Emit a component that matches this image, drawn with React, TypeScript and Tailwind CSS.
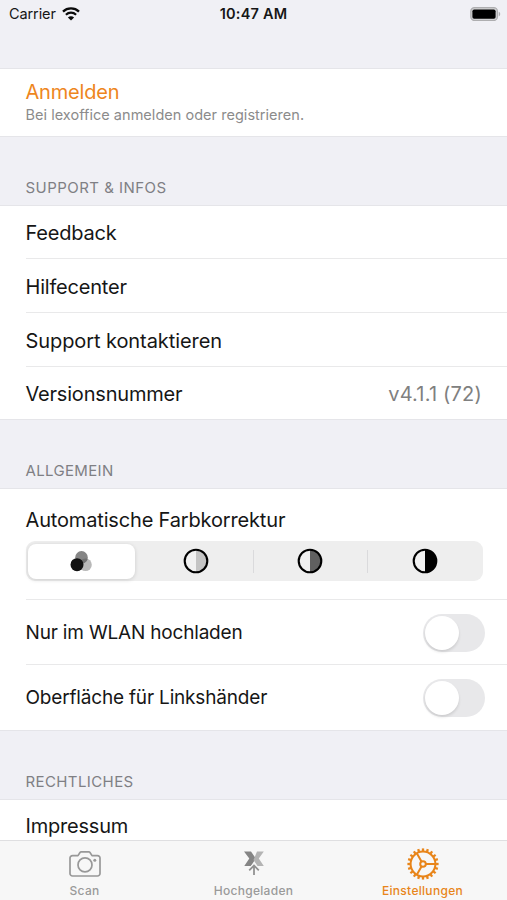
import React from 'react';

const supportRows = [
  { label: 'Feedback', value: '', height: 'h-[52px]', tracking: 'tracking-[-0.2px]' },
  { label: 'Hilfecenter', value: '', height: 'h-[54px]', tracking: 'tracking-[-0.2px]' },
  { label: 'Support kontaktieren', value: '', height: 'h-[54px]', tracking: 'tracking-[-0.08px]' },
  { label: 'Versionsnummer', value: 'v4.1.1 (72)', height: 'h-[53px]', tracking: 'tracking-[-0.2px]' },
];

const corrections = ['#c4c4c4', '#606060', '#000000'];

const WifiIcon = () => (
  <svg width="18" height="14" viewBox="0 0 18 14" fill="none" stroke="#0a0a0a">
    <path d="M1 4.6C5.4.4 12.6.4 17 4.6" strokeWidth="2.3" />
    <path d="M3.9 7.7c2.9-2.7 7.3-2.7 10.2 0" strokeWidth="2.2" />
    <path d="M9 13.6L5.9 10.4c1.8-1.6 4.4-1.6 6.2 0z" fill="#0a0a0a" stroke="none" />
  </svg>
);

const BatteryIcon = () => (
  <svg width="31" height="14" viewBox="0 0 31 14">
    <rect x="0.8" y="0.7" width="26.6" height="12.8" rx="3.6" fill="#d0d0d2" stroke="#aeaeb0" strokeWidth="1.2" />
    <rect x="2.4" y="2.4" width="23.2" height="9.3" rx="1.8" fill="#000" />
    <path d="M28.7 4.8c2 .7 2 3.9 0 4.6z" fill="#aeaeb0" />
  </svg>
);

const FiltersIcon = () => (
  <svg width="24" height="24" viewBox="0 0 24 24">
    <circle cx="16.5" cy="15.7" r="6.3" fill="#b8b8b8" />
    <circle cx="12.5" cy="8.4" r="6.3" fill="#858585" />
    <path d="M10.6 14.4a6.3 6.3 0 0 0 8-4.7 6.3 6.3 0 0 0-8 4.7z" fill="#707070" />
    <circle cx="8" cy="15.7" r="6.5" fill="#111" />
  </svg>
);

const ContrastIcon = ({ fill }: { fill: string }) => (
  <svg width="26" height="26" viewBox="0 0 26 26">
    <circle cx="13" cy="13" r="11.3" fill="#f1f1f1" />
    <path d="M13 1.7a11.3 11.3 0 0 1 0 22.6z" fill={fill} />
    <circle cx="13" cy="13" r="11.3" fill="none" stroke="#000" strokeWidth="2.1" />
  </svg>
);

const CameraIcon = () => (
  <svg width="32" height="26" viewBox="0 0 32 26" fill="none" stroke="#989898" strokeWidth="1.7" strokeLinejoin="round">
    <path d="M3.5 4.6H9l2-3.1c.3-.4.6-.6 1.1-.6h7.8c.5 0 .8.2 1.1.6l2 3.1h5.5A2.5 2.5 0 0 1 31 7.1v15.4a2.5 2.5 0 0 1-2.5 2.5h-25A2.5 2.5 0 0 1 1 22.5V7.1a2.5 2.5 0 0 1 2.5-2.5z" />
    <circle cx="16" cy="13.9" r="7" />
    <circle cx="25.8" cy="9.2" r="1.5" fill="#989898" stroke="none" />
  </svg>
);

const UploadedIcon = () => (
  <svg width="20" height="25" viewBox="0 0 20 25">
    <path d="M0 .5h7l4.800 7L7 15H.3l5-7.500z" fill="#858585" />
    <path d="M13 .5h6.800l-5 7 5 7.500h-6.300L9.500 9z" fill="#b4b4b4" />
    <path d="M10 11.600L5.500 16.200h9z" fill="#f7f7f7" />
    <path d="M10 24V14.500M5.200 19.400L10 14.600l4.800 4.800" fill="none" stroke="#929292" strokeWidth="1.8" />
  </svg>
);

const teeth = Array.from({ length: 20 }, (_, i) => i * 18);

const GearIcon = () => (
  <svg width="32" height="32" viewBox="0 0 32 32" fill="none" stroke="#e8851a" strokeWidth="2">
    <circle cx="16" cy="16" r="12.4" />
    {teeth.map((angle) => (
      <path key={angle} d="M16 .4v3.4" strokeWidth="2.3" transform={`rotate(${angle} 16 16)`} />
    ))}
    <circle cx="16" cy="16" r="2.8" />
    <path d="M19 16h9.4M14.5 13.4L9.8 5.3M14.5 18.6l-4.7 8.1" />
  </svg>
);

const SectionTitle = ({ children, className }: { children: React.ReactNode; className: string }) => (
  <h2 className={`flex items-end pl-[25.5px] text-[15px] leading-5 text-[#7f7f84] ${className}`}>{children}</h2>
);

const Toggle = () => (
  <button role="switch" aria-checked="false" className="flex h-[38px] w-[62px] items-center rounded-full bg-[#e8e8ea] pl-[2px]">
    <span className="h-[34px] w-[34px] rounded-full bg-white shadow-[0_2px_3px_rgba(0,0,0,0.12)]" />
  </button>
);

const App = () => {
  return (
    <div className="flex h-[900px] w-[507px] flex-col overflow-hidden bg-[#f0f0f5] font-['Inter','Liberation_Sans',sans-serif] text-[20px] text-[#161616]">
      <header className="grid h-[68px] shrink-0 grid-cols-3 items-start px-[9px] pt-[4px] text-[14.5px] leading-5">
        <div className="flex items-center gap-[6px] tracking-[-0.1px]">
          Carrier
          <WifiIcon />
        </div>
        <div className="text-center font-semibold tracking-[0.2px]">10:47 AM</div>
        <div className="mr-[-3px] flex h-[19px] items-center justify-end">
          <BatteryIcon />
        </div>
      </header>

      <main className="min-h-0 flex-1 overflow-hidden">
        <section className="h-[69px] border-y border-[#e5e5e9] bg-white pl-[25.5px] pt-[10px]">
          <p className="leading-[26px] tracking-[-0.2px] text-[#ee861d]">Anmelden</p>
          <p className="text-[14.5px] leading-5 tracking-[0.03px] text-[#8b8b8b]">Bei lexoffice anmelden oder registrieren.</p>
        </section>

        <SectionTitle className="h-[68px] pb-[7px] tracking-[0.46px]">SUPPORT &amp; INFOS</SectionTitle>
        <section className="border-y border-[#e5e5e9] bg-white pl-[25.5px]">
          {supportRows.map((row, index) => (
            <div
              key={row.label}
              className={`flex items-center justify-between pr-[25px] pt-[2px] ${row.height} ${index > 0 ? 'border-t border-[#e9e9ea]' : ''}`}
            >
              <span className={row.tracking}>{row.label}</span>
              <span className="tracking-[0.2px] text-[#808080]">{row.value}</span>
            </div>
          ))}
        </section>

        <SectionTitle className="h-[68px] pb-[7px] tracking-[0.35px]">ALLGEMEIN</SectionTitle>
        <section className="border-y border-[#e5e5e9] bg-white pl-[25.5px]">
          <div className="h-[110px] pr-[24.5px] pt-[18px]">
            <p className="leading-[26px] tracking-[-0.16px]">Automatische Farbkorrektur</p>
            <div className="mt-[8px] grid h-[40px] grid-cols-[113px_114px_114px_1fr] items-center rounded-[9px] bg-[#eee]">
              <button className="ml-[2px] mr-[4px] flex h-[35px] items-center justify-center rounded-[8px] bg-white shadow-[0_1px_4px_rgba(0,0,0,0.14)]">
                <FiltersIcon />
              </button>
              {corrections.map((fill, index) => (
                <button
                  key={fill}
                  className={`flex h-[23px] items-center justify-center ${index > 0 ? 'border-l border-[#dadadc]' : ''}`}
                >
                  <ContrastIcon fill={fill} />
                </button>
              ))}
            </div>
          </div>
          <div className="flex h-[65px] items-center justify-between border-t border-[#e9e9ea] pr-[22px] pt-px">
            <span className="pt-[2px] text-[19px] tracking-[-0.18px]">Nur im WLAN hochladen</span>
            <Toggle />
          </div>
          <div className="flex h-[66px] items-center justify-between border-t border-[#e9e9ea] pr-[22px] pt-px">
            <span className="pt-px text-[19px] tracking-[-0.18px]">Oberfläche für Linkshänder</span>
            <Toggle />
          </div>
        </section>

        <SectionTitle className="h-[68px] pb-[7px] tracking-[0.4px]">RECHTLICHES</SectionTitle>
        <section className="h-[54px] border-t border-[#e5e5e9] bg-white pl-[25.5px] leading-[52px] tracking-[-0.2px]">Impressum</section>
      </main>

      <nav className="grid h-[60px] shrink-0 grid-cols-3 border-t border-[#dfdfe1] bg-[#f7f7f7] text-[12px] font-medium leading-4 tracking-[0.3px] text-[#9a9a9a]">
        <button className="flex flex-col items-center justify-between pb-[1px] pt-[10px]">
          <CameraIcon />
          Scan
        </button>
        <button className="flex flex-col items-center justify-between pb-[1px] pt-[10px]">
          <UploadedIcon />
          Hochgeladen
        </button>
        <button className="flex flex-col items-center justify-between pb-[1px] pt-[7px] text-[#e8851a]">
          <GearIcon />
          Einstellungen
        </button>
      </nav>
    </div>
  );
};

export default App;
